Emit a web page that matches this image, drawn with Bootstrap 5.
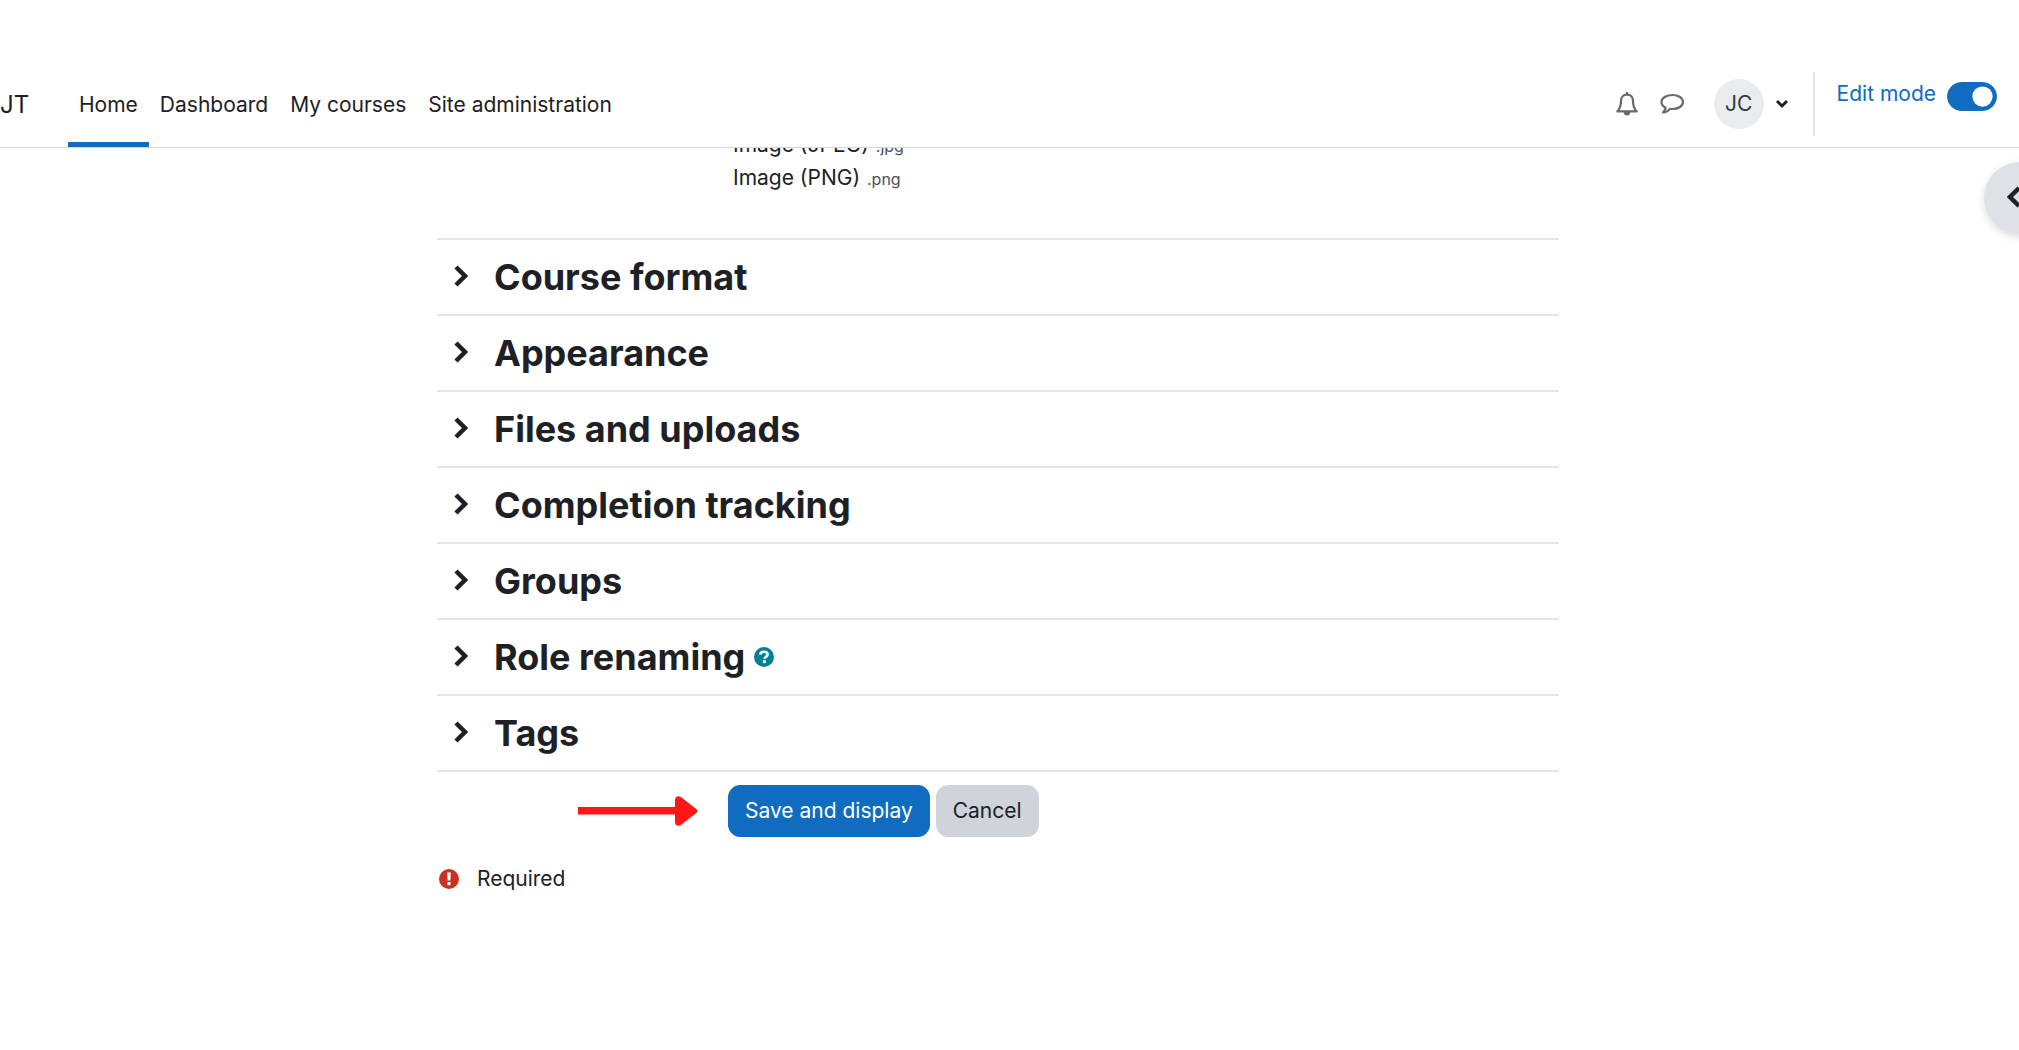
<!DOCTYPE html>
<html lang="en">
<head>
<meta charset="utf-8">
<meta name="viewport" content="width=device-width, initial-scale=1">
<title>Edit course settings</title>
<link rel="stylesheet" href="https://cdn.jsdelivr.net/npm/bootstrap@5.3.0/dist/css/bootstrap.min.css">
<style>
  body { font-family: Inter, "Liberation Sans", sans-serif; font-size: 21px; line-height: 32px; color: #1d2125; background: #fff; overflow-x: hidden; }
  a { color: inherit; text-decoration: none; }
  svg { display: block; flex: none; }
  .topbar { padding: 60px 22px 0 0; border-bottom: 1px solid #d3d9de; background: #fff; z-index: 10; }
  .brand { font-size: 24px; width: 68px; padding-top: 29px; }
  .topnav .nav-link { color: #1d2125; padding: 29px 11px 21px; border-bottom: 5px solid transparent; line-height: 32px; }
  .topnav .nav-link.active { border-bottom-color: #0f6cbf; }
  .usertools { height: 64px; margin: 12px 0 11px; gap: 22px; }
  .tool { border: 0; background: none; padding: 0; color: #6a6a6a; }
  .avatar { width: 50px; height: 50px; border-radius: 50%; background: #e9ecef; color: #343a40; }
  .editmode { border-left: 2px solid #dee2e6; height: 64px; padding-left: 22px; color: #0f6cbf; gap: 11px; }
  .editmode label { line-height: 44px; }
  .form-switch .form-check-input { width: 50px; height: 29px; margin: 10px 0 0; background-color: #0f6cbf; border-color: #0f6cbf; --bs-form-switch-bg: url("data:image/svg+xml,%3csvg xmlns='http://www.w3.org/2000/svg' viewBox='-4 -4 8 8'%3e%3ccircle r='3.4' fill='%23fff'/%3e%3c/svg%3e"); }
  .drawer-toggle { position: fixed; top: 162px; right: -37px; width: 72px; height: 72px; border: 0; border-radius: 50%; background: #dee2e6; padding: 0 0 2px 23px; box-shadow: 0 3px 8px rgba(0,0,0,.14); color: #1d2125; z-index: 5; }
  .page { padding-right: 23px; margin-top: -19px; }
  .course-form { width: 100%; max-width: 1122px; margin: 0 auto; }
  .filetypes { margin: 0 0 43px; padding-left: 296px; list-style: none; }
  .filetypes small { font-size: 16px; color: #495057; margin-left: 1px; }
  .section { border-top: 2px solid #e2e6e9; height: 76px; }
  .section:last-of-type { border-bottom: 2px solid #e2e6e9; height: 78px; }
  .section h3 { font-size: 36px; font-weight: 700; line-height: 44px; margin: 0; }
  .section-toggle { border: 0; background: none; padding: 0 0 2px 17px; width: 57px; color: #1d2125; }
  .help-icon { margin-left: 9px; }
  .actions { padding: 13px 0 0 141px; }
  .actions .btn { font-size: 21px; line-height: 32px; padding: 9px 16px; border-radius: 12px; border-width: 1px; }
  .actions .btn-save { color: #fff; background: #0f6cbf; border-color: #0f6cbf; margin: 0 6px 0 30px; }
  .actions .btn-dismiss { color: #1d2125; background: #ced4da; border-color: #ced4da; }
  .required { margin-top: 26px; gap: 18px; padding-left: 2px; }
</style>
</head>
<body>
<header class="topbar sticky-top d-flex justify-content-between align-items-start">
  <div class="d-flex align-items-start">
    <a class="brand" href="#">JT</a>
    <ul class="topnav nav flex-nowrap">
      <li class="nav-item"><a class="nav-link active" aria-current="page" href="#">Home</a></li>
      <li class="nav-item"><a class="nav-link" href="#">Dashboard</a></li>
      <li class="nav-item"><a class="nav-link" href="#">My courses</a></li>
      <li class="nav-item"><a class="nav-link" href="#">Site administration</a></li>
    </ul>
  </div>
  <div class="usertools d-flex align-items-center">
    <button class="tool" type="button" aria-label="Notifications">
      <svg width="22" height="24" viewBox="0 0 22 24" fill="none" stroke="currentColor" stroke-width="2.200" stroke-linejoin="round"><path d="M11 2.600c-4 0-6 3-6 6.400 0 5-1 7.600-3.600 10.400h19.200C18 16.600 17 14 17 9c0-3.400-2-6.400-6-6.400z"/><path d="M11 0v3"/><path d="M7.800 20a3.200 3.600 0 0 0 6.400 0z" fill="currentColor" stroke="none"/></svg>
    </button>
    <button class="tool" type="button" aria-label="Messages">
      <svg width="24" height="22" viewBox="0 0 24 22" fill="none" stroke="currentColor" stroke-width="2.200" stroke-linejoin="round"><path d="M12.500 2C6.500 2 1.500 5 1.500 9c0 2.400 1.600 4.500 4.200 5.800-.4 2-1.400 3.300-2.700 4.700 3-.3 5.400-1.600 7-3.700.8.100 1.600.2 2.500.2C18.500 16 23 13 23 9s-4.500-7-10.500-7z"/></svg>
    </button>
    <button class="tool d-flex align-items-center ps-2" type="button" aria-label="User menu">
      <span class="avatar d-flex align-items-center justify-content-center">JC</span>
      <svg class="ms-2" width="19" height="12" viewBox="0 0 19 12" fill="none" stroke="#1d2125" stroke-width="3"><path d="M5 3l5 5 5-5"/></svg>
    </button>
    <div class="editmode form-switch d-flex align-items-start">
      <label for="editmode">Edit mode</label>
      <input class="form-check-input" type="checkbox" role="switch" id="editmode" checked>
    </div>
  </div>
</header>

<button class="drawer-toggle" type="button" aria-label="Open block drawer">
  <svg width="16" height="24" viewBox="0 0 16 24" fill="none" stroke="currentColor" stroke-width="4.500"><path d="M12 3L3 12l9 9"/></svg>
</button>

<main class="page">
  <form class="course-form">
    <ul class="filetypes">
      <li>Image (JPEG) <small>.jpg</small></li>
      <li>Image (PNG) <small>.png</small></li>
    </ul>
    <section class="section d-flex align-items-center">
      <button class="section-toggle" type="button" aria-label="Expand Course format"><svg width="14" height="22" viewBox="0 0 14 22" fill="none" stroke="currentColor" stroke-width="4.500"><path d="M2 2l9 9-9 9"/></svg></button>
      <h3>Course format</h3>
    </section>
    <section class="section d-flex align-items-center">
      <button class="section-toggle" type="button" aria-label="Expand Appearance"><svg width="14" height="22" viewBox="0 0 14 22" fill="none" stroke="currentColor" stroke-width="4.500"><path d="M2 2l9 9-9 9"/></svg></button>
      <h3>Appearance</h3>
    </section>
    <section class="section d-flex align-items-center">
      <button class="section-toggle" type="button" aria-label="Expand Files and uploads"><svg width="14" height="22" viewBox="0 0 14 22" fill="none" stroke="currentColor" stroke-width="4.500"><path d="M2 2l9 9-9 9"/></svg></button>
      <h3>Files and uploads</h3>
    </section>
    <section class="section d-flex align-items-center">
      <button class="section-toggle" type="button" aria-label="Expand Completion tracking"><svg width="14" height="22" viewBox="0 0 14 22" fill="none" stroke="currentColor" stroke-width="4.500"><path d="M2 2l9 9-9 9"/></svg></button>
      <h3>Completion tracking</h3>
    </section>
    <section class="section d-flex align-items-center">
      <button class="section-toggle" type="button" aria-label="Expand Groups"><svg width="14" height="22" viewBox="0 0 14 22" fill="none" stroke="currentColor" stroke-width="4.500"><path d="M2 2l9 9-9 9"/></svg></button>
      <h3>Groups</h3>
    </section>
    <section class="section d-flex align-items-center">
      <button class="section-toggle" type="button" aria-label="Expand Role renaming"><svg width="14" height="22" viewBox="0 0 14 22" fill="none" stroke="currentColor" stroke-width="4.500"><path d="M2 2l9 9-9 9"/></svg></button>
      <h3>Role renaming</h3>
      <button class="tool help-icon" type="button" aria-label="Help with Role renaming">
        <svg width="20" height="20" viewBox="0 0 20 20"><circle cx="10" cy="10" r="10" fill="#008196"/><path d="M6.300 7.700C6.500 5.700 8 4.800 10 4.800c2.200 0 3.600 1 3.600 2.800 0 2.300-3 2.200-3 4.200" fill="none" stroke="#fff" stroke-width="2.600"/><path d="M8.800 13.200h3v2.900h-3z" fill="#fff"/></svg>
      </button>
    </section>
    <section class="section d-flex align-items-center">
      <button class="section-toggle" type="button" aria-label="Expand Tags"><svg width="14" height="22" viewBox="0 0 14 22" fill="none" stroke="currentColor" stroke-width="4.500"><path d="M2 2l9 9-9 9"/></svg></button>
      <h3>Tags</h3>
    </section>
    <div class="actions d-flex align-items-center">
      <svg width="120" height="30" viewBox="0 0 120 30" fill="#ff1616" aria-hidden="true"><path d="M0 11h97V4c0-4 4-5 6.500-2.500l14.500 11.300c2 1.500 2 3 0 4.500L103.500 28.500C101 31 97 30 97 26v-7.500H0z"/></svg>
      <button class="btn btn-save" type="submit">Save and display</button>
      <button class="btn btn-dismiss" type="button">Cancel</button>
    </div>
    <div class="required d-flex align-items-center">
      <svg width="20" height="20" viewBox="0 0 20 20"><circle cx="10" cy="10" r="10" fill="#ca3120"/><path d="M8.200 3.500h3.600l-.4 8H8.600zM8.500 13h3v3.200h-3z" fill="#fff"/></svg>
      <span>Required</span>
    </div>
  </form>
</main>
<script src="https://cdn.jsdelivr.net/npm/bootstrap@5.3.0/dist/js/bootstrap.bundle.min.js"></script>
</body>
</html>
